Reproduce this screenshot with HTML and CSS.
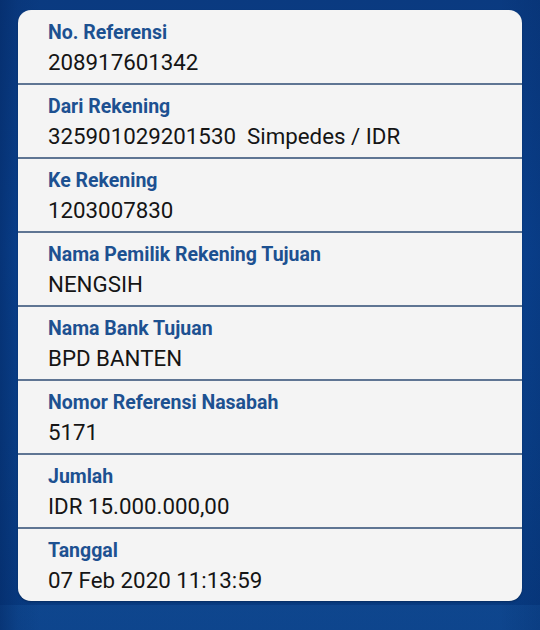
FILE: index.html
```html
<!DOCTYPE html>
<html lang="id">
<head>
<meta charset="utf-8">
<title>Detail Transaksi</title>
<link rel="stylesheet" href="styles.css">
</head>
<body>
<main class="screen">
  <section class="card">
    <div class="row">
      <div class="label">No. Referensi</div>
      <div class="value">208917601342</div>
    </div>
    <div class="row">
      <div class="label">Dari Rekening</div>
      <div class="value">325901029201530&nbsp; Simpedes / IDR</div>
    </div>
    <div class="row">
      <div class="label">Ke Rekening</div>
      <div class="value">1203007830</div>
    </div>
    <div class="row">
      <div class="label">Nama Pemilik Rekening Tujuan</div>
      <div class="value">NENGSIH</div>
    </div>
    <div class="row">
      <div class="label">Nama Bank Tujuan</div>
      <div class="value">BPD BANTEN</div>
    </div>
    <div class="row">
      <div class="label">Nomor Referensi Nasabah</div>
      <div class="value">5171</div>
    </div>
    <div class="row">
      <div class="label">Jumlah</div>
      <div class="value">IDR 15.000.000,00</div>
    </div>
    <div class="row">
      <div class="label">Tanggal</div>
      <div class="value">07 Feb 2020 11:13:59</div>
    </div>
  </section>
</main>
</body>
</html>
```
FILE: styles.css
```css
html, body {
  margin: 0;
  padding: 0;
}
body {
  width: 540px;
  height: 630px;
  overflow: hidden;
  font-family: Roboto, "Liberation Sans", sans-serif;
  background-color: #083e88;
  background-image:
    linear-gradient(90deg, rgba(3,40,100,0.55) 0, rgba(3,40,100,0.15) 18px, rgba(0,0,0,0) 40px, rgba(0,0,0,0) 500px, rgba(3,40,100,0.25) 540px),
    linear-gradient(180deg, rgba(0,0,0,0) 0, rgba(0,0,0,0) 605px, rgba(25,90,165,0.35) 605px),
    linear-gradient(180deg, #0a3a80 0, #0a4290 40%, #0a4089 70%, #083a80 100%);
}
.screen {
  padding: 10px 18px 29px 18px;
  height: 630px;
  box-sizing: border-box;
}
.card {
  background: #f4f4f4;
  border-radius: 13px;
  height: 591px;
  display: flex;
  flex-direction: column;
  overflow: hidden;
  box-shadow: 0 1px 2px rgba(0,0,0,0.25);
}
.row {
  flex: 1;
  padding: 11px 30px 0 30px;
  border-top: 2px solid #5f7593;
  display: flex;
  flex-direction: column;
  gap: 5px;
}
.row:first-child {
  border-top: 0;
  padding-top: 12px;
}
.label {
  font-size: 19.5px;
  line-height: 22px;
  font-weight: 700;
  color: #1d5191;
}
.value {
  font-size: 22.3px;
  line-height: 26px;
  color: #151515;
}
```
